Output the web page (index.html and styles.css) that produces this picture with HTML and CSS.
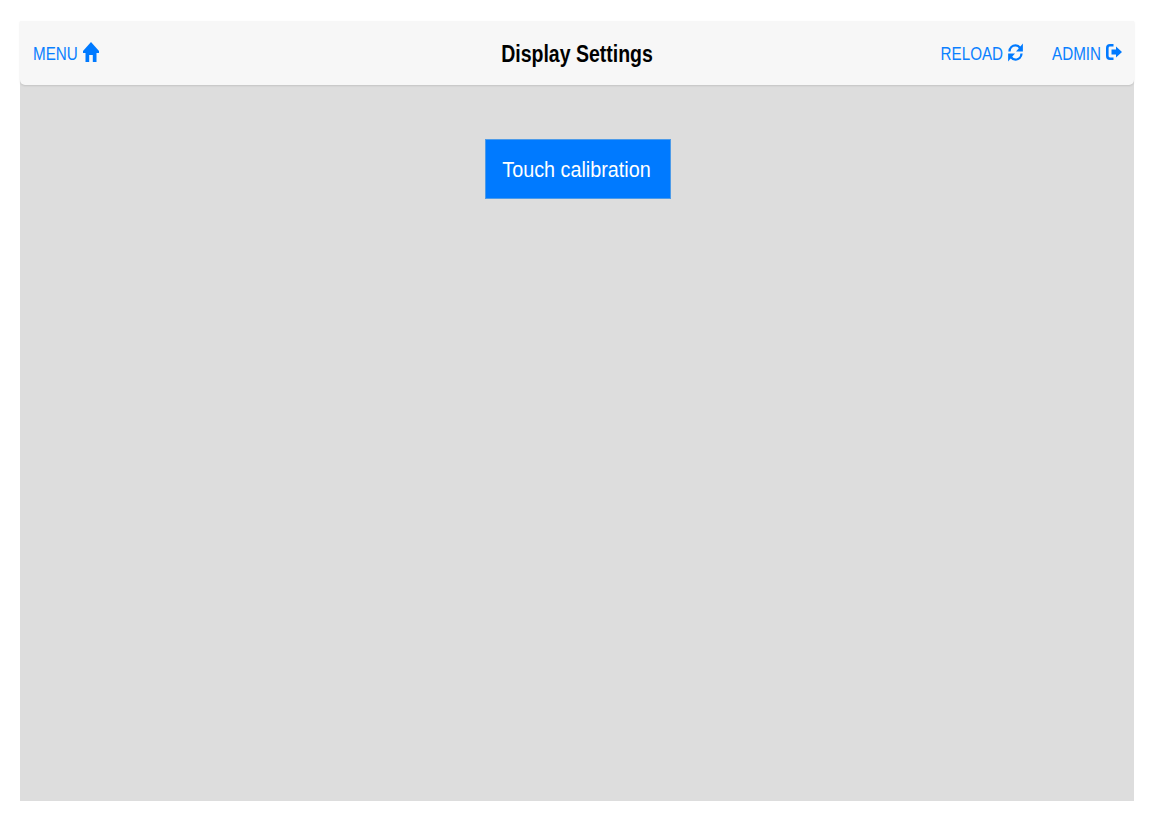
FILE: index.html
```html
<!DOCTYPE html>
<html lang="en">
<head>
    <meta charset="UTF-8">
    <meta name="viewport" content="width=device-width, initial-scale=1.0">
    <title>Display Settings</title>
    <link rel="stylesheet" href="styles.css">
</head>
<body>
    <div class="panel">
        <header class="navbar">
            <a class="nav-link" href="#">
                <span class="nav-text">MENU</span>
                <svg class="icon icon-home" viewBox="0 0 16 20"><path d="M8 0 L16 9 V11 H13.5 V20 H9.8 V13 H6.2 V20 H2.5 V11 H0 V9 Z"/></svg>
            </a>
            <h1 class="title">Display Settings</h1>
            <div class="nav-right">
                <a class="nav-link" href="#">
                    <span class="nav-text">RELOAD</span>
                    <svg class="icon icon-reload" viewBox="0 0 14 18">
                        <path class="icon-line" d="M1.300 8 C1.500 4.500 4 2.300 7 2.300 C8.800 2.300 10.200 3.200 11.200 4.500"/>
                        <path d="M14 0.500 V8 H7.500 Z"/>
                        <path class="icon-line" d="M12.700 10 C12.500 13.500 10 15.700 7 15.700 C5.200 15.700 3.800 14.800 2.800 13.500"/>
                        <path d="M0 17.500 V10 H6.500 Z"/>
                    </svg>
                </a>
                <a class="nav-link" href="#">
                    <span class="nav-text">ADMIN</span>
                    <svg class="icon icon-admin" viewBox="0 0 16 16">
                        <path class="icon-line icon-line-thick" d="M7.500 1.300 H4 Q1.300 1.300 1.300 4 V12 Q1.300 14.700 4 14.700 H7.500"/>
                        <path d="M5.500 5.500 H10 V2.500 L16 8 L10 13.500 V10.500 H5.500 Z"/>
                    </svg>
                </a>
            </div>
        </header>
        <main class="content">
            <button class="action-button"><span class="button-text">Touch calibration</span></button>
        </main>
    </div>
</body>
</html>
```

FILE: styles.css
```css
html, body {
    height: 100%;
}
body {
    font-family: "Liberation Sans", Arial, sans-serif;
    background-color: #fff;
    margin: 0;
    padding: 21px 24px 21px 20px;
    box-sizing: border-box;
}
.panel {
    height: 100%;
    display: flex;
    flex-direction: column;
    background-color: #dddddd;
}
.navbar {
    height: 64px;
    flex: none;
    display: flex;
    align-items: center;
    justify-content: space-between;
    position: relative;
    padding: 0 12px 0 13px;
    background-color: #f7f7f7;
    border-radius: 0 0 5px 5px;
    box-shadow: 0 1px 2px rgba(0, 0, 0, 0.12);
}
.nav-right {
    display: flex;
    gap: 29px;
}
.nav-link {
    display: flex;
    align-items: center;
    gap: 5px;
    color: #0a80ff;
    text-decoration: none;
    font-size: 15.2px;
}
.nav-text {
    transform: scaleY(1.22);
}
.icon {
    display: block;
    fill: #007aff;
    position: relative;
    top: -1px;
}
.icon-line {
    fill: none;
    stroke: #007aff;
    stroke-width: 2.2;
}
.icon-line-thick {
    stroke-width: 2.6;
}
.icon-home {
    width: 16px;
    height: 20px;
}
.icon-reload {
    width: 15px;
    height: 19px;
}
.icon-admin {
    width: 16px;
    height: 16px;
}
.title {
    position: absolute;
    left: 0;
    right: 0;
    margin: 0;
    text-align: center;
    font-size: 19.5px;
    font-weight: bold;
    color: #000;
    pointer-events: none;
    transform: translateY(1px) scaleY(1.18);
}
.content {
    display: flex;
    justify-content: center;
    padding: 54px 0 0 1px;
}
.action-button {
    width: 186px;
    height: 60px;
    padding: 0 2px 0 0;
    background-color: #007aff;
    border: 1px solid #4d9be8;
    color: #fff;
    font-family: inherit;
    font-size: 19.8px;
    cursor: pointer;
}
.button-text {
    display: inline-block;
    transform: scaleY(1.15);
}
```
